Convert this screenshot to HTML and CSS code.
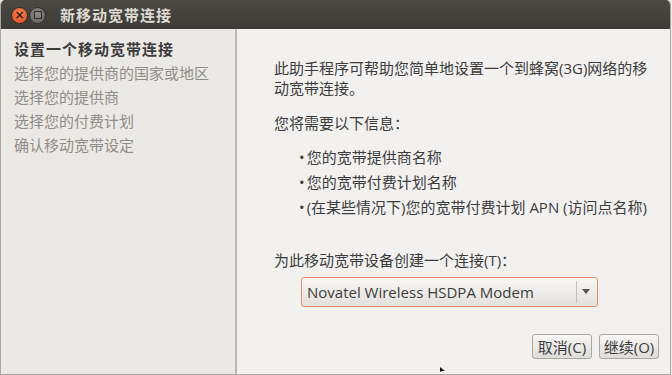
FILE: index.html
```html
<!DOCTYPE html>
<html lang="zh-CN">
<head>
    <meta charset="UTF-8">
    <meta name="viewport" content="width=device-width, initial-scale=1.0">
    <title>新移动宽带连接</title>
    <link rel="stylesheet" href="styles.css">
</head>
<body>

    <div class="window">
        <div class="titlebar">
            <span class="wm-btn wm-close">&times;</span>
            <span class="wm-btn wm-min"><span class="wm-square"></span></span>
            <span class="wm-title">新移动宽带连接</span>
        </div>

        <div class="content">
            <div class="steps">
                <div class="step current">设置一个移动宽带连接</div>
                <div class="step">选择您的提供商的国家或地区</div>
                <div class="step">选择您的提供商</div>
                <div class="step">选择您的付费计划</div>
                <div class="step">确认移动宽带设定</div>
            </div>

            <div class="page">
                <p class="intro">此助手程序可帮助您简单地设置一个到蜂窝(3G)网络的移动宽带连接。</p>
                <p class="need">您将需要以下信息：</p>
                <ul class="info-list">
                    <li>您的宽带提供商名称</li>
                    <li>您的宽带付费计划名称</li>
                    <li>(在某些情况下)您的宽带付费计划 APN (访问点名称)</li>
                </ul>

                <label class="device-label" for="device">为此移动宽带设备创建一个连接(T)：</label>
                <div class="combo" id="device">
                    <span class="combo-text">Novatel Wireless HSDPA Modem</span>
                    <span class="combo-arrow"></span>
                </div>

                <div class="actions">
                    <button type="button">取消(C)</button>
                    <button type="button">继续(O)</button>
                </div>
            </div>
        </div>

        <svg class="pointer" width="6" height="6" viewBox="0 0 6 6">
            <polygon points="0,0 0,5 2,4 5,4" fill="#111"/>
        </svg>
    </div>

</body>
</html>
```

FILE: styles.css
```css
body {
    margin: 0;
    padding: 0;
    background-color: #eeedeb;
    font-family: "Open Sans", "Noto Sans CJK SC", sans-serif;
    font-size: 15px;
    color: #3c3c3c;
}
.window {
    position: relative;
    width: 669px;
    height: 374px;
    border-left: 1px solid #a9a8a3;
    border-right: 1px solid #a9a8a3;
    border-bottom: 1px solid #a9a8a3;
    border-radius: 5px 5px 0 0;
    overflow: hidden;
    display: flex;
    flex-direction: column;
}
.titlebar {
    height: 29px;
    flex: none;
    display: flex;
    align-items: center;
    background: linear-gradient(#4a4944, #3c3b37);
    padding-left: 10px;
    box-sizing: border-box;
}
.wm-btn {
    width: 17px;
    height: 17px;
    border-radius: 50%;
    display: flex;
    justify-content: center;
    align-items: center;
    margin-top: 1px;
    margin-right: 1px;
    box-sizing: border-box;
}
.wm-close {
    background: radial-gradient(circle at 50% 35%, #f6855b, #e0491c);
    border: 1px solid #2e2d2a;
    color: #3a1a10;
    font-family: "DejaVu Sans", sans-serif;
    font-size: 12px;
    font-weight: bold;
    line-height: 1;
}
.wm-min {
    background: radial-gradient(circle at 50% 35%, #8b8a85, #5f5e5a);
    border: 1px solid #2e2d2a;
}
.wm-square {
    width: 6px;
    height: 6px;
    border: 1px solid #2f2e2b;
}
.wm-title {
    margin-left: 13px;
    color: #dfdbd2;
    font-family: "Noto Sans CJK SC", sans-serif;
    font-weight: bold;
    font-size: 15px;
    letter-spacing: 1px;
}
.content {
    flex: 1;
    display: flex;
}
.steps {
    flex: none;
    width: 236px;
    background-color: #ebe9e6;
    border-right: 2px solid #bdbab5;
    padding: 8px 0 0 13px;
    box-sizing: border-box;
}
.step {
    font-family: "Noto Sans CJK SC", sans-serif;
    line-height: 24px;
    color: #8f8c87;
}
.step.current {
    color: #3c3c3c;
    font-weight: bold;
    letter-spacing: 1px;
}
.page {
    flex: 1;
    background-color: #f2f1f0;
    padding: 29px 11px 0 37px;
    display: flex;
    flex-direction: column;
}
.page p {
    margin: 0;
    line-height: 20px;
}
.intro {
    width: 380px;
}
.need {
    margin-top: 15px !important;
}
.info-list {
    list-style: none;
    margin: 12px 0 0 0;
    padding: 0 0 0 25px;
    line-height: 25px;
}
.info-list li::before {
    content: "\2022";
    margin-right: 2px;
}
.device-label {
    margin-top: 30px;
    line-height: 20px;
}
.combo {
    margin: 7px 0 0 27px;
    width: 297px;
    height: 30px;
    box-sizing: border-box;
    border: 1px solid #e08b69;
    border-radius: 3px;
    background: linear-gradient(#f8f7f6, #e3e1dd);
    display: flex;
    align-items: center;
}
.combo-text {
    flex: 1;
    padding-left: 5px;
    color: #3c3c3c;
}
.combo-arrow {
    width: 20px;
    height: 22px;
    border-left: 1px solid #c2bfba;
    position: relative;
}
.combo-arrow::after {
    content: "";
    position: absolute;
    left: 5px;
    top: 8px;
    border-left: 4px solid transparent;
    border-right: 4px solid transparent;
    border-top: 5px solid #555;
}
.actions {
    display: flex;
    justify-content: flex-end;
    gap: 7px;
    margin-top: 27px;
}
.actions button {
    width: 60px;
    height: 25px;
    padding: 0;
    border: 1px solid #a9a7a2;
    border-radius: 3px;
    background: linear-gradient(#f8f7f6, #dfddd9);
    font-family: "Open Sans", "Noto Sans CJK SC", sans-serif;
    font-size: 15px;
    color: #3c3c3c;
}
.pointer {
    position: absolute;
    left: 439px;
    top: 367px;
}
```
